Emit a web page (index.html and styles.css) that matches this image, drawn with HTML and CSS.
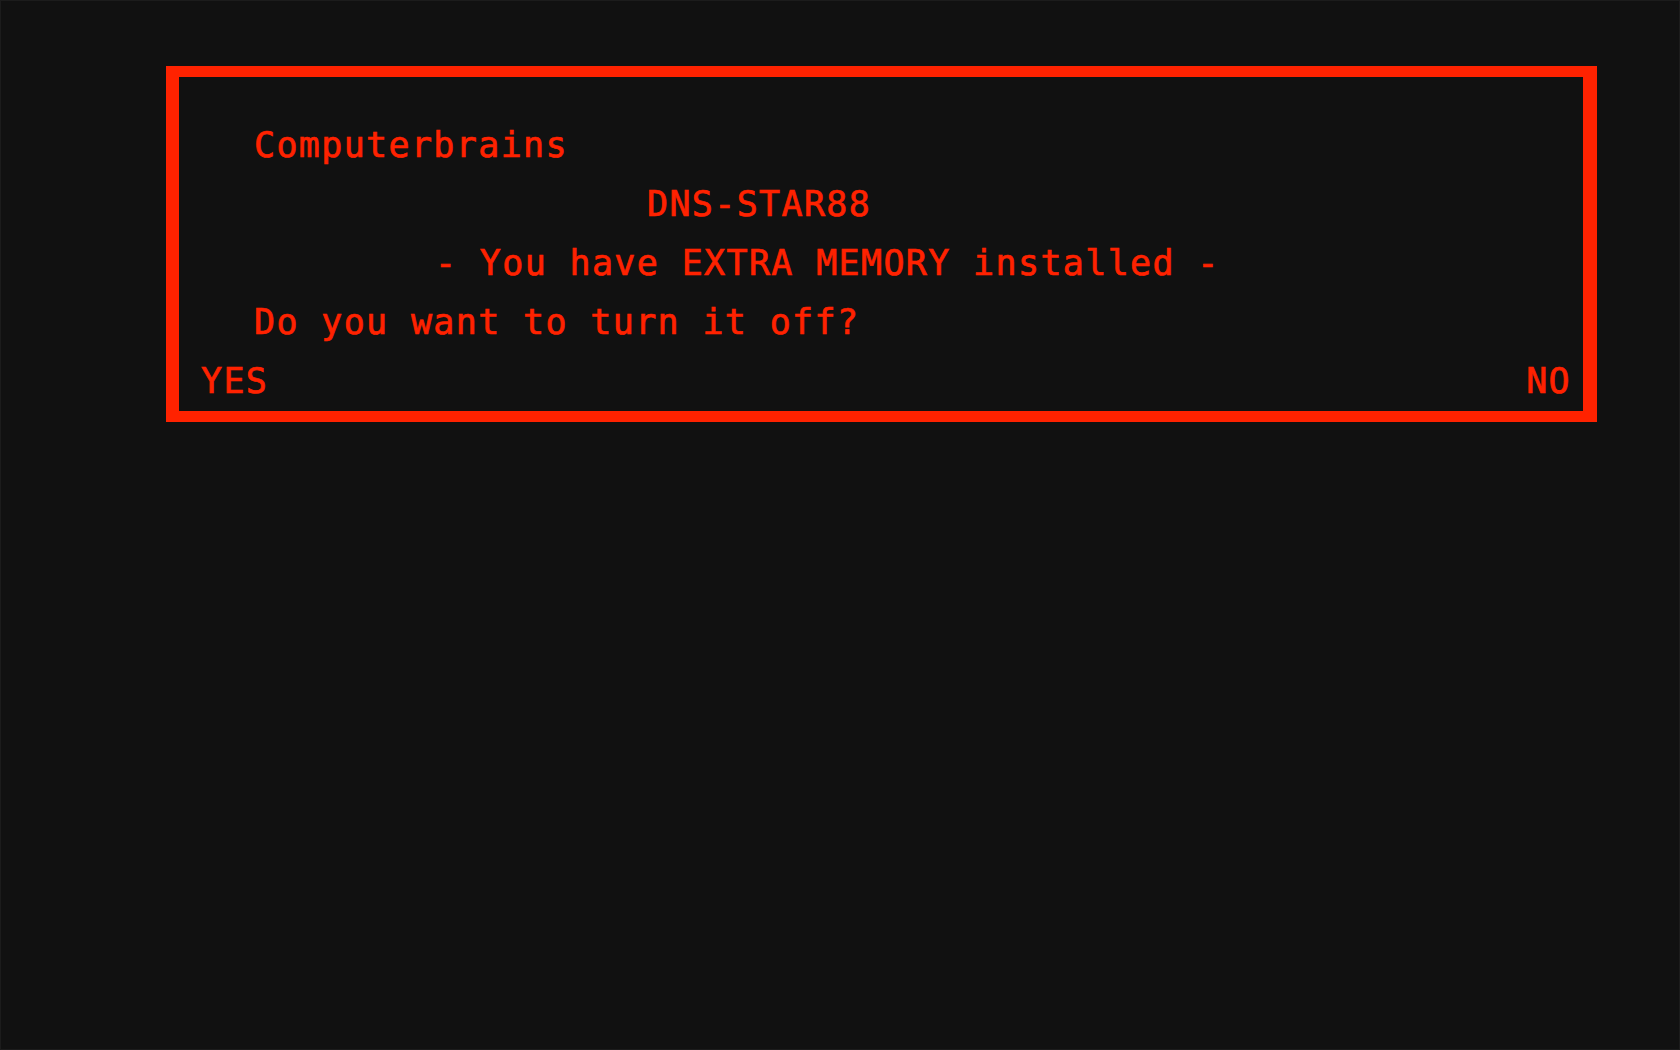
FILE: index.html
```html
<!DOCTYPE html>
<html lang="en">
<head>
<meta charset="utf-8">
<title>DNS-STAR88</title>
<link rel="stylesheet" href="styles.css">
</head>
<body>
<div class="screen">
  <div class="dialog">
    <p class="line indent-1">Computerbrains</p>
    <p class="line indent-2">DNS-STAR88</p>
    <p class="line indent-3">- You have EXTRA MEMORY installed -</p>
    <p class="line indent-1">Do you want to turn it off?</p>
    <div class="choices">
      <span class="choice">YES</span>
      <span class="choice">NO</span>
    </div>
  </div>
</div>
</body>
</html>
```

FILE: styles.css
```css
html, body {
  margin: 0;
  padding: 0;
  background: #111111;
}

.screen {
  box-sizing: border-box;
  width: 1680px;
  height: 1050px;
  padding: 66px 0 0 166px;
  border: 1px solid #1c1c1c;
}

.dialog {
  box-sizing: border-box;
  width: 1431px;
  height: 356px;
  margin: -1px 0 0 -1px;
  border-style: solid;
  border-color: #ff2200;
  border-width: 11px 14px 11px 13px;
  padding: 39px 12px 0 22px;
  font-family: "DejaVu Sans Mono", "Liberation Mono", monospace;
  font-size: 35px;
  font-weight: normal;
  -webkit-text-stroke: 0.7px #ff2200;
  line-height: 59px;
  letter-spacing: 1.35px;
  color: #ff2200;
}

.line {
  margin: 0;
  white-space: pre;
}

.indent-1 { margin-left: 53px; }
.indent-2 { margin-left: 446px; }
.indent-3 { margin-left: 234px; }

.choices {
  display: flex;
  justify-content: space-between;
}
```
